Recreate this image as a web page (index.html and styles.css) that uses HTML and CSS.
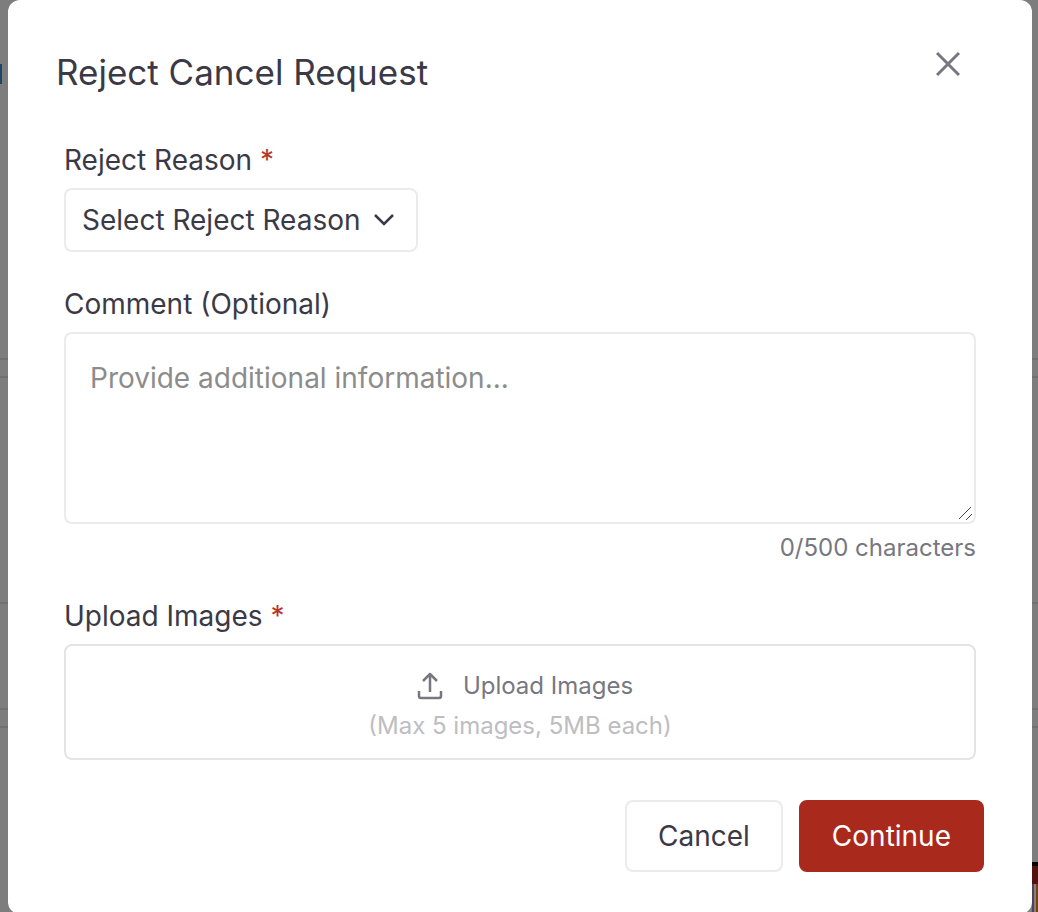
FILE: index.html
```html
<!DOCTYPE html>
<html lang="en">
<head>
    <meta charset="utf-8">
    <title>Reject Cancel Request</title>
    <meta name="viewport" content="width=device-width, initial-scale=1">
    <link rel="stylesheet" href="styles.css">
</head>
<body>

<!-- Dimmed page behind the dialog -->
<div class="backdrop" aria-hidden="true">
    <div class="panel panel-top"><span class="tab-mark"></span></div>
    <div class="panel panel-middle"><div class="panel-head"></div></div>
    <div class="panel panel-bottom"></div>
    <div class="thumb"></div>
</div>

<form class="modal" role="dialog" aria-labelledby="modalTitle">
    <div class="modal-header">
        <h1 id="modalTitle">Reject Cancel Request</h1>
        <button type="button" class="close-button" aria-label="Close">
            <svg width="24" height="24" viewBox="0 0 24 24" fill="none" stroke="currentColor" stroke-width="3">
                <path d="M1 1l22 22M23 1L1 23"/>
            </svg>
        </button>
    </div>

    <div class="modal-body">
        <div class="field">
            <label for="reason">Reject Reason <span class="required">*</span></label>
            <div class="select-wrap">
                <select id="reason" required>
                    <option value="">Select Reject Reason</option>
                </select>
                <svg class="chevron" width="20" height="12" viewBox="0 0 20 12" fill="none" stroke="currentColor" stroke-width="2.5">
                    <path d="M1 1l9 9 9-9"/>
                </svg>
            </div>
        </div>

        <div class="field">
            <label for="comment">Comment (Optional)</label>
            <textarea id="comment" maxlength="500" placeholder="Provide additional information..."></textarea>
            <div class="counter">0/500 characters</div>
        </div>

        <div class="field">
            <label for="upload">Upload Images <span class="required">*</span></label>
            <button type="button" class="upload" id="upload">
                <span class="upload-title">
                    <svg width="26" height="28" viewBox="0 0 26 28" fill="none" stroke="currentColor" stroke-width="2.5" stroke-linejoin="round">
                        <path d="M13 20V3M6 9l7-7 7 7M2 19v5q0 2 2 2h18q2 0 2-2v-5"/>
                    </svg>
                    Upload Images
                </span>
                <span class="upload-hint">(Max 5 images, 5MB each)</span>
            </button>
        </div>
    </div>

    <div class="modal-footer">
        <button type="button" class="button">Cancel</button>
        <button type="submit" class="button button-danger">Continue</button>
    </div>
</form>

</body>
</html>
```
FILE: styles.css
```css
/* General Styles */
* {
    box-sizing: border-box;
}

body {
    margin: 0;
    padding: 0 6px 0 8px;
    min-height: 100vh;
    background-color: #7d7d7d;
    color: #3b3946;
    font-family: Inter, sans-serif;
    font-size: 28px;
    line-height: 40px;
    overflow: hidden;
}

button, select, textarea {
    font: inherit;
    color: inherit;
}

/* Page behind the dialog */
.backdrop {
    position: absolute;
    inset: 0;
    z-index: -1;
}

.panel {
    border-bottom: 2px solid #707070;
}

.panel-top {
    height: 360px;
    padding-top: 64px;
}

.tab-mark {
    display: block;
    width: 2px;
    height: 20px;
    background-color: #1f4468;
}

.panel-middle {
    height: 334px;
    margin-top: 16px;
    border-top: 2px solid #707070;
}

.panel-head {
    height: 226px;
    border-bottom: 2px solid #707070;
}

.panel-bottom {
    margin-top: 16px;
}

.thumb {
    width: 6px;
    height: 50px;
    margin-top: 134px;
    margin-left: auto;
    border-top: 4px solid #050505;
    background: linear-gradient(#54120e 18px, transparent 18px),
        linear-gradient(to right, #4d4060 2px, #8a807a 2px 4px, #74430d 4px);
}

/* Modal */
.modal {
    padding: 40px 48px;
    min-height: 914px;
    background-color: #fff;
    border-radius: 12px;
}

.modal-header {
    display: flex;
    justify-content: space-between;
    align-items: flex-start;
}

.modal-header h1 {
    margin: 8px 0 0;
    font-size: 35px;
    font-weight: 400;
    line-height: 48px;
}

.close-button {
    display: flex;
    margin: 0 12px 0 0;
    padding: 12px;
    background: none;
    border: none;
    color: #777781;
    cursor: pointer;
}

.modal-body {
    display: flex;
    flex-direction: column;
    gap: 32px;
    padding: 44px 8px 0;
}

.field {
    display: flex;
    flex-direction: column;
    align-items: stretch;
    gap: 8px;
}

.required {
    color: #b5382b;
}

/* Select */
.select-wrap {
    position: relative;
    align-self: flex-start;
}

.select-wrap select {
    appearance: none;
    display: block;
    height: 64px;
    padding: 0 55px 0 16px;
    background-color: #fff;
    border: 2px solid #ebebeb;
    border-radius: 8px;
}

.chevron {
    position: absolute;
    top: 26px;
    right: 24px;
    pointer-events: none;
}

/* Comment */
textarea {
    display: block;
    width: 100%;
    height: 192px;
    padding: 24px;
    background-color: #fff;
    border: 2px solid #ebebeb;
    border-radius: 8px;
    resize: vertical;
}

textarea::placeholder {
    color: #8c8c8c;
}

textarea::-webkit-scrollbar {
    width: 16px;
}

textarea::-webkit-resizer {
    background: url("data:image/svg+xml,%3Csvg xmlns='http://www.w3.org/2000/svg' width='16' height='16' fill='none' stroke='%23444'%3E%3Cpath d='M0 14L14 0M8 14l6-6'/%3E%3C/svg%3E") no-repeat right bottom;
}

.counter {
    color: #777781;
    font-size: 24px;
    line-height: 32px;
    text-align: right;
}

/* Upload */
.upload {
    display: flex;
    flex-direction: column;
    align-items: center;
    padding: 20px 18px 12px;
    background-color: #fff;
    border: 2px solid #e4e4e4;
    border-radius: 8px;
    color: #777781;
    font-size: 24px;
    cursor: pointer;
}

.upload-title {
    display: flex;
    align-items: center;
    gap: 20px;
    padding-left: 10px;
}

.upload-hint {
    color: #bdbdc2;
}

/* Footer */
.modal-footer {
    display: flex;
    justify-content: flex-end;
    gap: 16px;
    margin-top: 40px;
}

.button {
    height: 72px;
    padding: 0 31px;
    background-color: #fff;
    border: 2px solid #ebebeb;
    border-radius: 8px;
    cursor: pointer;
}

.button-danger {
    background-color: #a9291d;
    border-color: #a9291d;
    color: #fff;
}
```
